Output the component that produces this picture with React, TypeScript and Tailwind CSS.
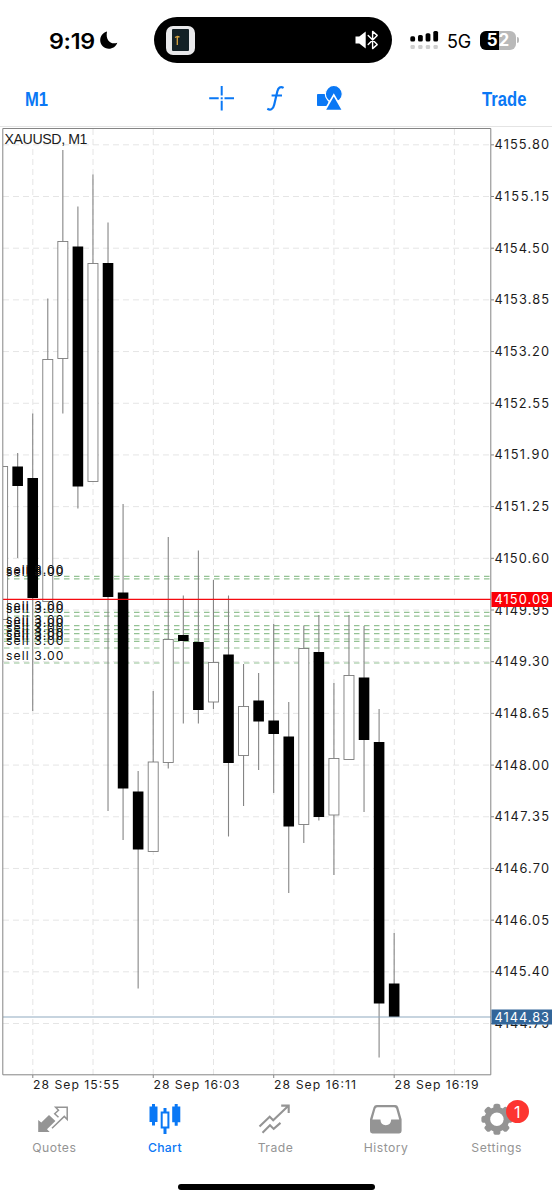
import type { ReactNode } from 'react'

type Candle = {
  high: number
  top: number
  bottom: number
  low: number
  up?: boolean
}

const STEP = 15.06
const FIRST_X = 2.6

// vertical positions inside the chart, in pixels
const candles: Candle[] = [
  { high: 466.5, top: 466.5, bottom: 619.5, low: 619.5, up: true },
  { high: 453, top: 466.5, bottom: 486, low: 558 },
  { high: 413.5, top: 478, bottom: 598, low: 711 },
  { high: 298.5, top: 359.5, bottom: 601.5, low: 601.5, up: true },
  { high: 150, top: 241.5, bottom: 358.5, low: 413.5, up: true },
  { high: 206.5, top: 246.5, bottom: 486.5, low: 508.5 },
  { high: 174.5, top: 263.5, bottom: 481.5, low: 481.5, up: true },
  { high: 222.5, top: 263, bottom: 597, low: 811 },
  { high: 504, top: 592.5, bottom: 788.5, low: 840 },
  { high: 771, top: 791.5, bottom: 849.5, low: 988.5 },
  { high: 691, top: 762, bottom: 851.5, low: 851.5, up: true },
  { high: 537, top: 639.5, bottom: 762.5, low: 768.5, up: true },
  { high: 595.5, top: 635, bottom: 641, low: 723.5 },
  { high: 550.5, top: 642, bottom: 710, low: 723.5 },
  { high: 580, top: 662.5, bottom: 702, low: 709, up: true },
  { high: 595.5, top: 654.5, bottom: 763, low: 836.5 },
  { high: 664, top: 706.5, bottom: 755.5, low: 806, up: true },
  { high: 673, top: 700.5, bottom: 721.5, low: 770 },
  { high: 624, top: 720.5, bottom: 734, low: 793 },
  { high: 702, top: 736.5, bottom: 826.5, low: 893 },
  { high: 625.5, top: 648.5, bottom: 824.5, low: 843, up: true },
  { high: 615, top: 652, bottom: 817, low: 820.5 },
  { high: 683, top: 758.5, bottom: 815, low: 875, up: true },
  { high: 615, top: 675.5, bottom: 759.5, low: 759.5, up: true },
  { high: 626, top: 677.5, bottom: 740, low: 812 },
  { high: 709, top: 742, bottom: 1003.5, low: 1057.5 },
  { high: 933, top: 983.5, bottom: 1017, low: 1017 },
]

const prices = [
  '4155.80', '4155.15', '4154.50', '4153.85', '4153.20', '4152.55',
  '4151.90', '4151.25', '4150.60', '4149.95', '4149.30', '4148.65',
  '4148.00', '4147.35', '4146.70', '4146.05', '4145.40', '4144.75',
]

const times = ['28 Sep 15:55', '28 Sep 16:03', '28 Sep 16:11', '28 Sep 16:19']

const orders = [576.3, 578.8, 612.3, 616.2, 625.7, 629.6, 633.6, 639, 641.4, 648, 663]
const orderLabels = [576, 578.5, 612, 615, 626, 629.5, 634, 639.5, 642, 647, 662.5]

const priceY = (i: number) => 144.8 + i * 51.69
const gridX = (i: number) => 32.8 + i * 60.23

function PriceText({ y, children, fill }: { y: number; children: string; fill?: string }) {
  return (
    <text x="494.5" y={y + 4.5} fontSize="12.8" textLength="54.5" fill={fill ?? '#1c1c1c'}>
      {children}
    </text>
  )
}

function Chart() {
  return (
    <svg
      viewBox="0 126 552 968"
      className="block h-[968px] w-[552px] font-[Inter,sans-serif]"
    >
      <defs>
        <clipPath id="plot">
          <rect x="3" y="128" width="488" height="947" />
        </clipPath>
      </defs>

      <g stroke="#e5e5e5" strokeWidth="1" strokeDasharray="6 4">
        {prices.map((p, i) => (
          <line key={p} x1="3" x2="490" y1={priceY(i)} y2={priceY(i)} />
        ))}
        {Array.from({ length: 8 }, (_, i) => (
          <line key={i} x1={gridX(i)} x2={gridX(i)} y1={i === 0 ? 149 : 129} y2="1075" />
        ))}
      </g>

      <g stroke="#93c293" strokeWidth="1.2" strokeDasharray="5.5 4.5">
        {orders.map((y) => (
          <line key={y} x1="3" x2="490" y1={y} y2={y} strokeDashoffset="-1" />
        ))}
      </g>

      <g clipPath="url(#plot)">
        {candles.map((c, i) => {
          const x = FIRST_X + i * STEP
          return (
            <g key={i}>
              <line x1={x} x2={x} y1={c.high} y2={c.low} stroke="#858585" strokeWidth="1.1" />
              {c.up ? (
                <rect
                  x={x - 5}
                  y={c.top}
                  width="10"
                  height={c.bottom - c.top}
                  fill="#fff"
                  stroke="#7c7c7c"
                  strokeWidth="0.9"
                />
              ) : (
                <rect x={x - 5.3} y={c.top} width="10.6" height={c.bottom - c.top} fill="#000" />
              )}
            </g>
          )
        })}
      </g>

      <g fontSize="12.2" fill="#111">
        {orderLabels.map((y) => (
          <text key={y} x="6" y={y - 2.5} textLength="57.5">
            sell 3.00
          </text>
        ))}
      </g>

      <line x1="3" x2="491" y1="1017" y2="1017" stroke="#8fa9bf" />
      <line x1="3" x2="491" y1="599.4" y2="599.4" stroke="#f50a10" strokeWidth="1.4" />

      <path d="M0 126.2H552" stroke="#d8d8d8" />
      <path d="M2.8 128.5H490.8V1074.8H2.8Z" fill="none" stroke="#858585" />

      <text
        x="4.5"
        y="144"
        fontSize="14.2"
        textLength="83"
        fill="#1c1c1c"
        className="font-['Liberation_Sans',sans-serif]"
      >
        XAUUSD, M1
      </text>

      {prices.map((p, i) => (
        <g key={p}>
          <line x1="491" x2="494" y1={priceY(i)} y2={priceY(i)} stroke="#858585" />
          <PriceText y={priceY(i)}>{p}</PriceText>
        </g>
      ))}
      <rect x="491.5" y="592" width="60.5" height="15" fill="#fb0007" />
      <PriceText y={599.5} fill="#fff">4150.09</PriceText>
      <rect x="491.5" y="1009.5" width="60.5" height="15" fill="#336699" />
      <PriceText y={1017} fill="#fff">4144.83</PriceText>

      {times.map((t, i) => (
        <g key={t}>
          <line x1={gridX(i * 2)} x2={gridX(i * 2)} y1="1075" y2="1078" stroke="#858585" />
          <text x={gridX(i * 2) + 0.3} y="1089.3" fontSize="12.2" textLength={i === 2 ? 82 : i === 3 ? 84 : 86} fill="#1c1c1c">
            {t}
          </text>
        </g>
      ))}
    </svg>
  )
}

function StatusBar() {
  return (
    <header className="flex h-20 items-center">
      <div className="flex w-[154px] items-center gap-[5px] pl-[49px]">
        <span className="w-[46px] pt-0.5 text-[22px] leading-none font-semibold tracking-[-0.3px] whitespace-nowrap">
          <span className="inline-block origin-left scale-x-[1.06]">9:19</span>
        </span>
        <svg viewBox="0 0 18 18" className="h-[18px] w-[18px]">
          <path d="M7 .5C2.8 1.8.2 5 .2 9.2c0 4.8 3.9 8.5 8.6 8.5 3.9 0 7.3-2.3 8.5-6-6.1 2.3-12.1-1.8-10.3-11.2Z" />
        </svg>
      </div>
      <div className="flex h-[46px] w-[238px] items-center justify-between rounded-full bg-black pr-[13px] pl-3">
        <div className="flex h-[29px] w-[29px] items-center justify-center rounded-[7px] bg-[#e9e9eb]">
          <svg viewBox="0 0 17 22" className="h-[22px] w-[17px]">
            <rect width="17" height="22" rx="1" fill="#142126" />
            <path d="M5.3 7v9M3 8.5l2.3-1L7.5 8" fill="none" stroke="#d9a441" strokeWidth="1.3" />
          </svg>
        </div>
        <svg viewBox="0 0 24 20" className="h-5 w-6">
          <path d="M.5 6.5h3.8L10.7 1.6v16.8L4.3 13.5H.5Z" fill="#fff" />
          <path
            d="M13.2 5.4l9 9.2-4.6 4V1.4l4.6 4-9 9.2"
            fill="none"
            stroke="#fff"
            strokeWidth="1.4"
            strokeLinejoin="round"
            strokeLinecap="round"
          />
        </svg>
      </div>
      <svg viewBox="0 0 30 20" className="ml-[17px] h-5 w-[30px]">
        <g fill="#000">
          <rect x="1.3" y="6.3" width="4.8" height="5.2" rx="1.6" />
          <rect x="9" y="5" width="4.8" height="6.5" rx="1.6" />
          <rect x="16.6" y="3.2" width="4.8" height="8.3" rx="1.6" />
          <rect x="24.3" y="1" width="4.8" height="10.5" rx="1.6" />
        </g>
        <g fill="#cfcfcf">
          <rect x="1.5" y="15" width="4.3" height="4" rx="1.2" />
          <rect x="9.2" y="15" width="4.3" height="4" rx="1.2" />
          <rect x="16.8" y="15" width="4.3" height="4" rx="1.2" />
          <rect x="24.5" y="15" width="4.3" height="4" rx="1.2" />
        </g>
      </svg>
      <span className="ml-2 w-[26px] pt-[3px] text-[18px] leading-none tracking-[-0.3px]">5G</span>
      <div className="ml-[7px] flex h-[19px] w-[36px] overflow-hidden rounded-[6px] bg-[#b9b9b9] text-[17px] leading-[19px] font-bold text-white">
        <span className="w-[18.5px] bg-black pr-px text-right">5</span>
        <span>2</span>
      </div>
      <span className="ml-px h-[6px] w-[2px] rounded-r-full bg-[#b9b9b9]" />
    </header>
  )
}

function Toolbar() {
  return (
    <div className="flex h-[46px] items-start pt-[6px] pr-[26px] pl-[25px] font-['Liberation_Sans',sans-serif] font-bold text-[#0a78f5]">
      <span className="w-[179px] pt-px text-[20px] leading-6">
        <span className="inline-block origin-left scale-x-[0.83]">M1</span>
      </span>
      <svg viewBox="0 0 140 28" className="-mt-px h-7 w-[140px] shrink-0">
        <g fill="none" stroke="#0a78f5" strokeWidth="2">
          <path d="M17.7 1v9.6M17.7 15.7v9.8M5.2 13.3h9.5M20.5 13.3h9.5" />
        </g>
        <rect x="16.7" y="12.3" width="2" height="2" fill="#0a78f5" />
        <path
          d="M79.6 2.9C76.5 1 74.2 2.5 73.3 6.5L70.2 19.7C69.1 24.4 66.6 25.5 63.3 23.8M67.6 10.5H78"
          fill="none"
          stroke="#0a78f5"
          strokeWidth="2.2"
        />
        <rect x="113" y="9" width="11.5" height="12" rx="0.8" fill="#0a78f5" />
        <circle cx="129.8" cy="9" r="8.5" fill="#0a78f5" stroke="#fff" strokeWidth="1.2" />
        <path d="M129.8 9.9L139 25.7H120.6Z" fill="#0a78f5" stroke="#fff" strokeWidth="1.7" />
      </svg>
      <span className="flex flex-1 justify-end pt-px text-[20px] leading-6">
        <span className="inline-block origin-right scale-x-[0.83]">Trade</span>
      </span>
    </div>
  )
}

function QuotesIcon() {
  return (
    <svg viewBox="0 0 34 34" className="h-[34px] w-[34px]">
      <path d="M1.2 17l3.1 2.6L12 12l6.4 6-8.4 8.2 2.7 2.9H1.2Z" fill="#949494" />
      <path
        d="M15 25.3L27.3 13.4l2.9 3V4.2H18.6l2.9 3-3.8 3.5 3.8 3.6"
        fill="none"
        stroke="#949494"
        strokeWidth="1.5"
      />
    </svg>
  )
}

function ChartIcon() {
  return (
    <svg viewBox="0 0 34 34" className="h-[34px] w-[34px]">
      <path
        d="M4 1h3v2.5h2.5V19H7v3.5H4V19H1.5V3.5H4ZM26.7 1h3v2.5h2.6v15.8h-2.6v3.5h-3v-3.5h-2.5V3.5h2.5Z"
        fill="#0a78f5"
      />
      <path d="M17 5v4M17 25v6" stroke="#0a78f5" strokeWidth="3" />
      <rect x="13.7" y="9.5" width="6.7" height="15" fill="#fff" stroke="#0a78f5" strokeWidth="2" />
    </svg>
  )
}

function TradeIcon() {
  return (
    <svg viewBox="0 0 34 34" className="h-[34px] w-[34px]">
      <path
        d="M1.5 23.5L11.7 13.8l3.5 3.5L30.7 2.6M23.2 2.6h7.5v7.4M4.5 29.8l7.5-7.5 3.7 3.6 6.8-6"
        fill="none"
        stroke="#949494"
        strokeWidth="2.1"
      />
    </svg>
  )
}

function HistoryIcon() {
  return (
    <svg viewBox="0 0 34 34" className="h-[34px] w-[34px]">
      <path
        fillRule="evenodd"
        d="M7.7 2H26.3Q28.5 2 29.2 4.2L32.6 16.2V28Q32.6 30.4 30.2 30.4H3.4Q1 30.4 1 28V16.2L4.6 4.2Q5.4 2 7.7 2ZM8.4 4.2Q6.8 4.2 6.4 5.7L3.4 16.5H11.4Q11.7 22.2 16.8 22.2T22.2 16.5H30.2L27.2 5.7Q26.8 4.2 25.2 4.2Z"
        fill="#949494"
      />
    </svg>
  )
}

function SettingsIcon() {
  return (
    <svg viewBox="0 0 34 34" className="h-[34px] w-[34px]">
      <g fill="#949494">
        {[0, 45, 90, 135].map((a) => (
          <rect key={a} x="13.4" y=".8" width="7" height="31" rx="2.6" transform={`rotate(${a} 16.9 16.3)`} />
        ))}
        <circle cx="16.9" cy="16.3" r="12.4" />
      </g>
      <circle cx="16.9" cy="16.3" r="6.7" fill="#fff" />
    </svg>
  )
}

function Tab({ label, active, badge, children }: {
  label: string
  active?: boolean
  badge?: string
  children: ReactNode
}) {
  return (
    <div className="flex flex-1 flex-col items-center">
      <div className="relative">
        {children}
        {badge && (
          <span className="absolute -top-[3px] left-[26px] flex h-[23px] w-[23px] items-center justify-center rounded-full bg-[#fd3530] text-[16px] text-white">
            {badge}
          </span>
        )}
      </div>
      <span
        className={
          active
            ? 'mt-[3px] text-[12.2px] leading-4 font-medium tracking-[0.35px] text-[#0a78f5]'
            : 'mt-[3px] text-[12.2px] leading-4 tracking-[0.5px] text-[#949494]'
        }
      >
        {label}
      </span>
    </div>
  )
}

export default function App() {
  return (
    <div className="flex h-[1200px] w-[552px] flex-col overflow-hidden bg-white font-[Inter,sans-serif] text-black">
      <StatusBar />
      <Toolbar />
      <Chart />
      <nav className="-ml-px flex h-[89px] pt-[9px]">
        <Tab label="Quotes"><QuotesIcon /></Tab>
        <Tab label="Chart" active><ChartIcon /></Tab>
        <Tab label="Trade"><TradeIcon /></Tab>
        <Tab label="History"><HistoryIcon /></Tab>
        <Tab label="Settings" badge="1"><SettingsIcon /></Tab>
      </nav>
      <div className="mt-px ml-[178px] h-[6px] w-[197px] rounded-full bg-black" />
    </div>
  )
}
